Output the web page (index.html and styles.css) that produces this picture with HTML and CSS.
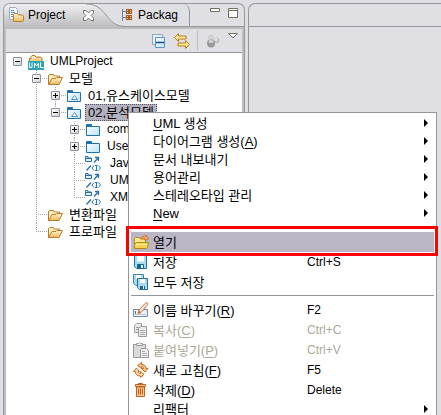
FILE: index.html
```html
<!DOCTYPE html>
<html lang="ko">
<head>
<meta charset="utf-8">
<title>UMLProject</title>
<link rel="stylesheet" href="styles.css">
</head>
<body>
<svg class="defs" width="0" height="0" aria-hidden="true">
  <defs>
    <linearGradient id="gold" x1="0" y1="0" x2="0" y2="1"><stop offset="0" stop-color="#fff6cf"/><stop offset="1" stop-color="#efb95c"/></linearGradient>
    <linearGradient id="sky" x1="0" y1="0" x2="1" y2="1"><stop offset="0" stop-color="#fff"/><stop offset="1" stop-color="#bfe2f5"/></linearGradient>
    <symbol id="folder-open" viewBox="0 0 16 16">
      <path d="M1.500 13V4.500l1-1h4l1 1.500h5v3" fill="#fdeeb8" stroke="#b87a2c"/>
      <path d="M1.500 13.500l3.500-6h4l1-1h5.500l-3.500 7z" fill="url(#gold)" stroke="#b87a2c"/>
    </symbol>
    <symbol id="folder-blue" viewBox="0 0 16 16">
      <path d="M1.500 13.500v-11h5v2h8v9z" fill="url(#sky)" stroke="#1f72b0"/>
      <path d="M1 4.500h13M2 3.500h4" stroke="#1f72b0"/>
    </symbol>
    <symbol id="folder-model" viewBox="0 0 16 16">
      <path d="M1.500 13.500v-11h5v2h8v9z" fill="url(#sky)" stroke="#1f72b0"/>
      <path d="M1 4.500h13M2 3.500h4" stroke="#1f72b0"/>
      <path d="M5.500 11.500l3-4 3 4z" fill="#fff" stroke="#4b93c8"/>
    </symbol>
    <symbol id="link-iface" viewBox="0 0 16 16">
      <path d="M.500 5.500v-5h2.500v1.500h3.500v3.500zM1 2.500h5" fill="#dff0fa" stroke="#2a6fa8"/>
      <path d="M1.500 14.500l4.500-5M9 6.500l4.500-5M10 1.500h3.500v3.500" fill="none" stroke="#2a6fa8" stroke-width="1.300"/>
      <path d="M9 9.500L7 12l2 2.500M13.500 9.500l2 2.500-2 2.500M10 9.500h2.500M11.500 9.500v5M10 14.500h2.500" fill="none" stroke="#2a78b4"/>
    </symbol>
  </defs>
</svg>

<main class="workbench">
  <section class="pane explorer">
    <header class="tabs">
      <svg class="tab-shape" width="120" height="23" viewBox="0 0 120 23" aria-hidden="true">
        <defs><linearGradient id="tabfill" x1="0" y1="0" x2="0" y2="1"><stop offset="0" stop-color="#efeff1"/><stop offset="1" stop-color="#bdbdbf"/></linearGradient></defs>
        <path d="M0 23V0h82c10 0 15 5 20 11s9 11 18 11.500v.500z" fill="url(#tabfill)"/>
        <path d="M82 0c10 0 15 5 20 11s9 11 18 11.500" fill="none" stroke="#96959c"/>
      </svg>
      <button class="tab active" type="button">
        <svg width="16" height="16" viewBox="0 0 16 16" aria-hidden="true">
          <path d="M1.500 12.500V.500h6l2 2v10z" fill="#eef5fc" stroke="#9aa9bd"/>
          <path d="M3 3.500h3M3 5.500h4M3 7.500h2M3 9.500h2" stroke="#5a92cc"/>
          <path d="M5.500 14.500v-7l1-1h3l1 1.500h4l1 1v4.500l-1 1z" fill="url(#gold)" stroke="#bf7f30"/>
        </svg>
        <span>Project</span>
      </button>
      <button class="close" type="button" aria-label="닫기">
        <svg width="11" height="11" viewBox="0 0 11 11"><path d="M.500.500h2.500l2.500 2.500L8 .500h2.500V3L8 5.500 10.500 8v2.500H8L5.500 8 3 10.500H.500V8L3 5.500.500 3z" fill="#fff" stroke="#77766a"/></svg>
      </button>
      <button class="tab other" type="button">
        <svg width="10" height="12" viewBox="0 0 10 12" shape-rendering="crispEdges" aria-hidden="true">
          <path d="M.500 0v12M1 2.500h3M1 8.500h3" stroke="#6d83a5"/>
          <path d="M4 0h6v5H4zM4 6h6v5H4z" fill="#a8591f"/>
          <path d="M5 1h1v1H5zM8 1h1v1H8zM5 3h1v1H5zM8 3h1v1H8zM5 7h1v1H5zM8 7h1v1H8zM5 9h1v1H5zM8 9h1v1H8z" fill="#ffd08a"/>
        </svg>
        <span>Packag</span>
      </button>
      <div class="window-buttons">
        <button type="button" aria-label="최소화"><svg width="10" height="10" viewBox="0 0 10 10"><path d="M.500.500h9v3h-9z" fill="#fff" stroke="#6f6e63"/></svg></button>
        <button type="button" aria-label="최대화"><svg width="10" height="10" viewBox="0 0 10 10"><path d="M.500.500h9v9h-9zM0 2.500h10" fill="#fff" stroke="#6f6e63"/></svg></button>
      </div>
    </header>

    <div class="view">
      <div class="toolbar">
        <button type="button" aria-label="모두 접기"><svg width="16" height="16" viewBox="0 0 16 16">
          <path d="M1.500 11.500v-10h10v10z" fill="#e6f2fa" stroke="#86a8c6"/><path d="M4.500 14.500v-10h9v10z" fill="url(#sky)" stroke="#5f93bb"/><path d="M5 9.500h8" stroke="#124f80" stroke-width="1.500"/></svg></button>
        <button type="button" aria-label="편집기와 연결"><svg width="16" height="16" viewBox="0 0 16 16">
          <path d="M.500 4.500l4-4v2.500H12v3H4.500v2.500zM15.500 11.500l-4-4V10H4v3h7.500v2.500z" fill="#ffe9a3" stroke="#c07d10"/></svg></button>
        <span class="divider"></span>
        <button type="button" aria-label="필터" disabled><svg width="16" height="16" viewBox="0 0 16 16">
          <circle cx="6" cy="4.500" r="3" fill="#d0d0d0"/><circle cx="11.500" cy="7.500" r="3" fill="#c2c2c2"/><circle cx="6" cy="10.500" r="4" fill="#999"/><ellipse cx="6" cy="8.500" rx="2.500" ry="1.500" fill="#d5d5d5"/><circle cx="11" cy="6.500" r="1.500" fill="#e2e2e2"/></svg></button>
        <button class="view-menu" type="button" aria-label="보기 메뉴"><svg width="10" height="6" viewBox="0 0 10 6"><path d="M.500.500h9L5 5z" fill="#fff" stroke="#6f6e63"/></svg></button>
      </div>

      <ul class="tree">
        <li>
          <div class="row"><button class="twist open" type="button" aria-label="접기"></button>
            <svg class="icon" viewBox="0 0 16 16"><path d="M1.500 8V4.500h1.500v-2l1-1h3l1 1.500h5l1 1.500v3.500z" fill="url(#gold)" stroke="#ad7a3a"/><path d="M0 7h16v9H0z" fill="#2ba3bd"/><path d="M1.500 8.500v5h2.500v-5M6.500 14v-5l2 3 2-3v5M12.500 8.500v5H15.500" fill="none" stroke="#fff"/></svg>
            <span class="label">UMLProject</span></div>
          <ul>
            <li>
              <div class="row"><button class="twist open" type="button" aria-label="접기"></button><svg class="icon"><use href="#folder-open"/></svg><span class="label ko">모델</span></div>
              <ul>
                <li><div class="row"><button class="twist" type="button" aria-label="펼치기"></button><svg class="icon"><use href="#folder-model"/></svg><span class="label ko">01,유스케이스모델</span></div></li>
                <li>
                  <div class="row"><button class="twist open" type="button" aria-label="접기"></button><svg class="icon"><use href="#folder-model"/></svg><span class="label ko selected">02,분석모델</span></div>
                  <ul>
                    <li><div class="row"><button class="twist" type="button" aria-label="펼치기"></button><svg class="icon"><use href="#folder-blue"/></svg><span class="label">com</span></div></li>
                    <li><div class="row"><button class="twist" type="button" aria-label="펼치기"></button><svg class="icon"><use href="#folder-blue"/></svg><span class="label">Use</span></div></li>
                    <li><div class="row leaf"><svg class="icon"><use href="#link-iface"/></svg><span class="label ref">Jav</span></div></li>
                    <li><div class="row leaf"><svg class="icon"><use href="#link-iface"/></svg><span class="label ref">UM</span></div></li>
                    <li><div class="row leaf"><svg class="icon"><use href="#link-iface"/></svg><span class="label ref">XM</span></div></li>
                  </ul>
                </li>
              </ul>
            </li>
            <li><div class="row leaf"><svg class="icon"><use href="#folder-open"/></svg><span class="label ko">변환파일</span></div></li>
            <li><div class="row leaf"><svg class="icon"><use href="#folder-open"/></svg><span class="label ko">프로파일</span></div></li>
          </ul>
        </li>
      </ul>
    </div>
  </section>

  <section class="pane editor"><div class="editor-tabs"></div></section>
</main>

<div class="menu">
  <div class="submenus">
    <button class="item sub" type="button"><span class="ko"><u>U</u>ML 생성</span><i class="arrow"></i></button>
    <button class="item sub" type="button"><span class="ko">다이어그램 생성(<u>A</u>)</span><i class="arrow"></i></button>
    <button class="item sub" type="button"><span class="ko">문서 내보내기</span><i class="arrow"></i></button>
    <button class="item sub" type="button"><span class="ko">용어관리</span><i class="arrow"></i></button>
    <button class="item sub" type="button"><span class="ko">스테레오타입 관리</span><i class="arrow"></i></button>
    <button class="item sub" type="button"><span class="ko"><u>N</u>ew</span><i class="arrow"></i></button>
  </div>
  <hr>
  <button class="item hot" type="button">
    <svg class="icon" viewBox="0 0 16 16"><path d="M1.500 13V4.500l1-1h4l1 1.500h5v3" fill="#fbe58a" stroke="#b58a1c"/><path d="M1.500 14.500v-4l2-2h12l-1 5-1 1z" fill="#f7d24a" stroke="#b58a1c"/><path d="M3 10.500h11" stroke="#fff2a8"/><path d="M8 4.500C9 2 11 1.500 13 3V1l2.500 4-4.500 1 1-1.500C10.500 3.500 9.500 4 8 4.500z" fill="#ffb07a" stroke="#d46a28" stroke-width=".8"/></svg>
    <span class="ko">열기</span></button>
  <button class="item" type="button">
    <svg class="icon" viewBox="0 0 16 16"><path d="M1.500 1.500h12v13h-10l-2-2z" fill="#a9daf2" stroke="#2273a8"/><path d="M4 2h7v5.500H4z" fill="#fff"/><path d="M4.500 14.500v-4h6v4z" fill="#176592" stroke="#176592"/><path d="M8 11h2v3H8z" fill="#e8f6fd"/></svg>
    <span class="ko">저장</span><span>Ctrl+S</span></button>
  <button class="item" type="button">
    <svg class="icon" viewBox="0 0 16 16"><path d="M.500.500h10v11h-8l-2-2z" fill="#a9daf2" stroke="#3a86b6"/><path d="M3 1h5v4H3z" fill="#fff"/><path d="M4.500 4.500h10v11h-8l-2-2z" fill="#a9daf2" stroke="#2273a8"/><path d="M7 5h5v4H7z" fill="#fff"/><path d="M7 12h5v3H7z" fill="#176592"/><path d="M10 12h1v3h-1z" fill="#fff"/></svg>
    <span class="ko">모두 저장</span></button>
  <hr>
  <button class="item" type="button">
    <svg class="icon" viewBox="0 0 16 16"><path d="M.500 7.500h14v7H.500z" fill="#eef2f8" stroke="#7184aa"/><path d="M2 12.500h11" stroke="#b8c4d8"/><path d="M2.500 9v3" stroke="#5c7095"/><path d="M5 11.500l1-3.500 6-6.500c1-1 2-1 2.500-.500s.500 1.500-.500 2.500L8 10.500z" fill="#fbe2c8" stroke="#c1794a"/><path d="M5 11.500l1-3 2 2z" fill="#c1682c"/></svg>
    <span class="ko">이름 바꾸기(<u>R</u>)</span><span>F2</span></button>
  <button class="item" type="button" disabled>
    <svg class="icon" viewBox="0 0 16 16"><path d="M1.500 10.500v-7l2-2h5v9z" fill="#e8e8e8" stroke="#a0a0a0"/><path d="M3 5.500h4M3 7.500h4" stroke="#a0a0a0"/><path d="M5.500 14.500v-8l2-2h6v10z" fill="#ececec" stroke="#999"/><path d="M7 8.500h5M7 10.500h5M7 12.500h5" stroke="#aaa"/></svg>
    <span class="ko">복사(<u>C</u>)</span><span>Ctrl+C</span></button>
  <button class="item" type="button" disabled>
    <svg class="icon" viewBox="0 0 16 16"><path d="M.500 15.500v-13h12v13z" fill="#dadada" stroke="#999"/><path d="M3.500 3.500v-2h2l1-1 1 1h2v2z" fill="#eee" stroke="#999"/><path d="M7.500 15.500v-8l1-1h5l2 2v7z" fill="#f0f0f0" stroke="#999"/><path d="M9 9.500h3M9 11.500h5M9 13.500h5" stroke="#aaa"/></svg>
    <span class="ko">붙여넣기(<u>P</u>)</span><span>Ctrl+V</span></button>
  <button class="item" type="button">
    <svg class="icon" viewBox="0 0 16 16"><path d="M4.500 3.500L8.500.500v2c3 0 4.500 1.500 4.500 4h2l-3 3.500-3.500-3.500h2c0-1.500-.500-2-2-2v2z" fill="#ffc48c" stroke="#c96a1c"/><path d="M.500 9.500l3-3.500 3 3.500H5c.200 1.500 1 2 2.500 2v-2l3.500 3-3.500 3v-1.500C4.500 14 2.500 12.500 2.300 9.500z" fill="#ffd9b0" stroke="#c96a1c"/></svg>
    <span class="ko">새로 고침(<u>F</u>)</span><span>F5</span></button>
  <button class="item" type="button">
    <svg class="icon" viewBox="0 0 16 16"><path d="M3.500 5v9.500h8V5z" fill="#fdc592" stroke="#c2601a"/><path d="M2.500 2.500h10v2h-10z" fill="#fdc592" stroke="#c2601a"/><path d="M5.500 2.500v-1h4v1" fill="none" stroke="#c2601a"/><path d="M5.500 6.500v6M7.500 6.500v6M9.500 6.500v6" stroke="#c2601a"/></svg>
    <span class="ko">삭제(<u>D</u>)</span><span>Delete</span></button>
  <button class="item sub" type="button"><span class="ko">리팩터</span><i class="arrow"></i></button>
</div>
</body>
</html>
```

FILE: styles.css
```css
* {
  box-sizing: border-box;
}

html,
body {
  height: 100%;
}

body {
  margin: 0;
  overflow: hidden;
  position: relative;
  background: #e0dfe4;
  color: #000;
  font: 12px/17px "Liberation Sans", "Noto Sans CJK KR", sans-serif;
}

button {
  margin: 0;
  padding: 0;
  border: 0;
  background: none;
  color: inherit;
  font: inherit;
  text-align: left;
}

svg {
  display: block;
  flex: none;
}

.defs {
  position: absolute;
}

.ko {
  font-size: 13px;
}

.icon {
  width: 16px;
  height: 16px;
}

/* Workbench panes */
.workbench {
  display: grid;
  grid-template-columns: minmax(0, 242fr) minmax(0, 193fr);
  gap: 3px;
  height: 100%;
  padding: 3px 0 0 3px;
}

.pane {
  border: 1px solid #96959c;
  border-bottom: 0;
  border-radius: 7px 7px 0 0;
  overflow: hidden;
}

.editor {
  border-right: 0;
  border-top-right-radius: 0;
}

.editor-tabs {
  height: 23px;
  border-bottom: 1px solid #96959c;
}

.explorer {
  display: flex;
  flex-direction: column;
}

/* Tabs */
.tabs {
  position: relative;
  display: flex;
  height: 23px;
  border-bottom: 1px solid #96959c;
}

.tab-shape {
  position: absolute;
  left: 0;
  top: 0;
}

.tab,
.close {
  position: relative;
  display: flex;
  align-items: center;
  height: 22px;
}

.tab.active {
  gap: 4px;
  padding-left: 4px;
  width: 79px;
}

.close {
  width: 39px;
}

.tab.other {
  gap: 6px;
  width: 68px;
  border-right: 1px solid #96959c;
  border-top-right-radius: 7px;
}

.window-buttons {
  display: flex;
  gap: 8px;
  margin-left: auto;
  padding: 4px 6px 0 0;
  align-items: flex-start;
}

/* Explorer view */
.view {
  flex: 1;
  min-height: 0;
  display: flex;
  flex-direction: column;
  border: 2px solid #bdbdbf;
  border-bottom: 0;
}

.toolbar {
  display: flex;
  justify-content: flex-end;
  align-items: center;
  gap: 7px;
  height: 24px;
  padding-right: 4px;
  border-bottom: 1px solid #96959c;
  background: #e0dfe4;
}

.divider {
  width: 1px;
  height: 19px;
  background: #bdbdbf;
}

.view-menu {
  align-self: flex-start;
  padding-top: 4px;
}

/* Tree */
.tree {
  flex: 1;
  background: #fff;
  padding-left: 7px;
}

ul {
  margin: 0;
  padding: 0;
  list-style: none;
}

.tree li {
  position: relative;
}

.tree ul {
  padding-left: 19px;
}

.tree ul > li::before {
  content: "";
  position: absolute;
  left: 4px;
  top: 0;
  width: 1px;
  height: 100%;
  background: repeating-linear-gradient(#aca899 0 1px, transparent 1px 2px);
}

.tree ul > li:last-child::before {
  height: 9px;
}

.row {
  position: relative;
  display: flex;
  align-items: center;
  height: 17px;
  white-space: nowrap;
}

.tree ul .row::before {
  content: "";
  position: absolute;
  left: 4px;
  top: 8px;
  width: 11px;
  height: 1px;
  background: repeating-linear-gradient(90deg, #aca899 0 1px, transparent 1px 2px);
}

.row .icon {
  margin-right: 3px;
}

.row.leaf {
  padding-left: 15px;
}

.twist {
  position: relative;
  width: 9px;
  height: 9px;
  margin-right: 6px;
  border: 1px solid #8790a3;
  border-radius: 1px;
  background:
    linear-gradient(#000, #000) center / 5px 1px no-repeat,
    linear-gradient(#000, #000) center / 1px 5px no-repeat,
    linear-gradient(135deg, #fff, #d8d5d0);
}

.twist.open {
  background:
    linear-gradient(#000, #000) center / 5px 1px no-repeat,
    linear-gradient(135deg, #fff, #d8d5d0);
}

.label {
  height: 17px;
  padding: 0 3px;
}

.label.ref {
  padding-left: 6px;
}

.label.selected {
  background: #b4b2c0;
  outline: 1px dotted #55545c;
  outline-offset: -1px;
}

/* Context menu */
.menu {
  position: absolute;
  left: 128px;
  right: 4px;
  top: 112px;
  padding: 1px 2px;
  border: 1px solid #96959c;
  background: #fff;
}

.submenus {
  padding-bottom: 2px;
}

.menu hr {
  height: 8px;
  margin: 0;
  padding: 0 1px;
  border: 0;
  background: linear-gradient(#96959c, #96959c) 0 3px / 100% 1px no-repeat;
}

.item {
  position: relative;
  display: grid;
  grid-template-columns: 16px 1fr 127px;
  column-gap: 4px;
  align-items: center;
  width: 100%;
  height: 20px;
  padding-left: 2px;
  white-space: nowrap;
}

.item.sub {
  height: 18px;
  grid-template-columns: 1fr auto;
  padding: 0 6px 0 22px;
}

.item:disabled {
  color: #aca899;
}

.item u {
  text-underline-offset: 2px;
}

.arrow {
  border: solid transparent;
  border-width: 4px 0 4px 4px;
  border-left-color: #000;
}

.hot {
  background: #bbb6c6;
}

.hot::after {
  content: "";
  position: absolute;
  z-index: 1;
  left: -5px;
  right: -4px;
  top: -6px;
  bottom: -4px;
  border: 3px solid #f00;
}
```
